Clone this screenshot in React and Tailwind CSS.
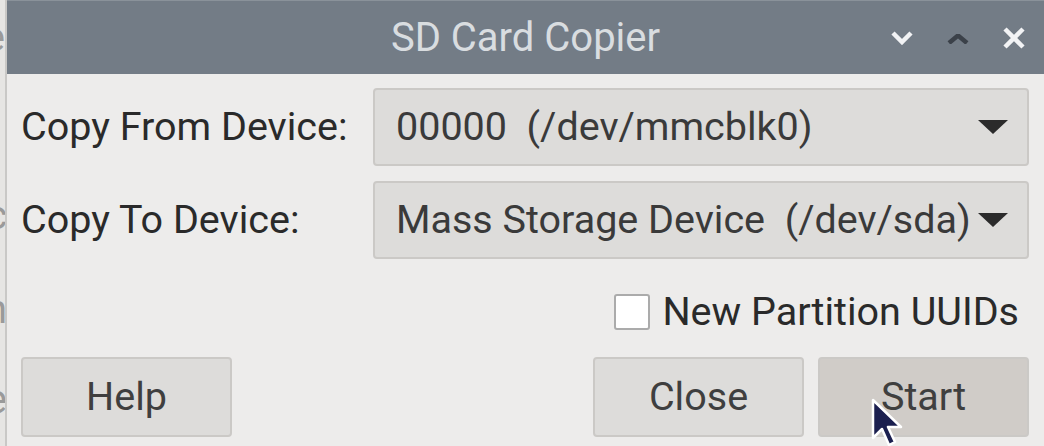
import React from "react";

const font = { fontFamily: "Roboto, 'Liberation Sans', sans-serif" };

function Triangle() {
  return (
    <svg width="30" height="14" viewBox="0 0 30 14" className="shrink-0">
      <path d="M0 0 H30 L15 14 Z" fill="#2b2b2b" />
    </svg>
  );
}

function Combo({ text }) {
  return (
    <div className="flex h-[78px] w-[656px] items-center rounded-[4px] border-2 border-[#cbc9c6] bg-[#dddcda] pl-[21px] pr-[19px]">
      <span className="flex-1 whitespace-pre text-[39.5px] leading-none text-[#3a3a3a]">{text}</span>
      <Triangle />
    </div>
  );
}

function Button({ children, active }) {
  return (
    <div
      className={`flex h-[80px] w-[211px] items-center justify-center rounded-[4px] border-2 border-[#cbc9c6] text-[39.5px] leading-none text-[#3f3f3f] ${
        active ? "bg-[#d0ccc8]" : "bg-[#dddcda]"
      }`}
    >
      {children}
    </div>
  );
}

export default function App() {
  return (
    <div className="relative flex h-[446px] w-[1044px] overflow-hidden bg-[#edeceb]" style={font}>
      {/* background window sliver */}
      <div className="relative w-[7px] shrink-0 overflow-hidden border-r-2 border-[#c9c8c6] bg-[#e6e5e3] text-[40px] leading-none text-[#9a9a9a]">
        <div className="absolute right-0 top-[18px]">e</div>
        <div className="absolute right-[-2px] top-[196px]">c</div>
        <div className="absolute right-[-2px] top-[290px]">n</div>
        <div className="absolute right-[-2px] top-[380px]">e</div>
      </div>

      <div className="flex flex-1 flex-col">
        {/* title bar */}
        <div className="relative flex h-[74px] shrink-0 items-center justify-center border-t border-[#8a929a] bg-[#737c86]">
          <span className="text-[40px] leading-none text-[#d9dde0]">SD Card Copier</span>
          <div className="absolute right-[19px] top-0 flex h-full items-center gap-[34px]">
            <svg width="22" height="14" viewBox="0 0 22 14">
              <path d="M2 2 L11 11 L20 2" fill="none" stroke="#f2f3f5" strokeWidth="4.5" />
            </svg>
            <svg width="22" height="10" viewBox="0 0 22 10" className="mt-[2px]">
              <path d="M2 9 L11 1.5 L20 9" fill="none" stroke="#3b4149" strokeWidth="4.5" />
            </svg>
            <svg width="22" height="22" viewBox="0 0 22 22">
              <path d="M2 2 L20 20 M20 2 L2 20" fill="none" stroke="#f2f3f5" strokeWidth="4.5" />
            </svg>
          </div>
        </div>

        {/* body */}
        <div className="flex flex-1 flex-col pl-[14px] pr-[15px] pt-[14px]">
          <div className="flex items-center justify-between">
            <span className="text-[39.5px] leading-none text-[#2a2a2a]">Copy From Device:</span>
            <Combo text="00000  (/dev/mmcblk0)" />
          </div>
          <div className="mt-[15px] flex items-center justify-between">
            <span className="text-[39.5px] leading-none text-[#2a2a2a]">Copy To Device:</span>
            <Combo text="Mass Storage Device  (/dev/sda)" />
          </div>
          <div className="mt-[33px] flex items-center justify-end gap-[12px] pr-[10px]">
            <div className="h-[36px] w-[36px] rounded-[3px] border-2 border-[#ababab] bg-white" />
            <span className="text-[39.5px] leading-none text-[#2a2a2a]">New Partition UUIDs</span>
          </div>
          <div className="mt-[25px] flex items-center">
            <Button>Help</Button>
            <div className="flex-1" />
            <Button>Close</Button>
            <div className="w-[14px]" />
            <Button active>Start</Button>
          </div>
        </div>
      </div>

      {/* mouse cursor */}
      <svg className="absolute left-[871px] top-[398px]" width="36" height="50" viewBox="0 0 36 50">
        <path
          d="M2 2 L2 40 L11 31 L18 47 L24 44 L17 29 L30 29 Z"
          fill="#1b1f4f"
          stroke="#ffffff"
          strokeWidth="2.5"
          strokeLinejoin="round"
        />
      </svg>
    </div>
  );
}
